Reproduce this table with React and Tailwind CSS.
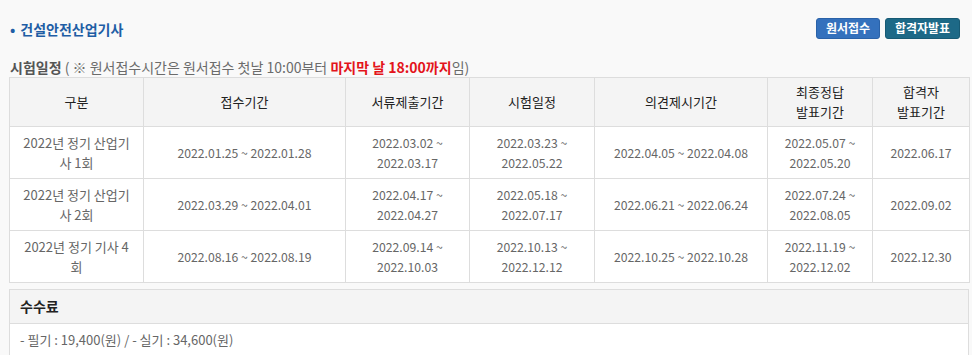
const COLS = [
  { label: ['구분'], w: 'w-[134px]' },
  { label: ['접수기간'], w: 'w-[202px]' },
  { label: ['서류제출기간'], w: 'w-[124px]' },
  { label: ['시험일정'], w: 'w-[125px]' },
  { label: ['의견제시기간'], w: 'w-[173px]' },
  { label: ['최종정답', '발표기간'], w: 'w-[105px]' },
  { label: ['합격자', '발표기간'], w: 'w-[97px]' },
]

// each cell is a list of lines, as wrapped in the original
const ROWS = [
  [['2022년 정기 산업기', '사 1회'], ['2022.01.25 ~ 2022.01.28'], ['2022.03.02 ~', '2022.03.17'], ['2022.03.23 ~', '2022.05.22'], ['2022.04.05 ~ 2022.04.08'], ['2022.05.07 ~', '2022.05.20'], ['2022.06.17']],
  [['2022년 정기 산업기', '사 2회'], ['2022.03.29 ~ 2022.04.01'], ['2022.04.17 ~', '2022.04.27'], ['2022.05.18 ~', '2022.07.17'], ['2022.06.21 ~ 2022.06.24'], ['2022.07.24 ~', '2022.08.05'], ['2022.09.02']],
  [['2022년 정기 기사 4', '회'], ['2022.08.16 ~ 2022.08.19'], ['2022.09.14 ~', '2022.10.03'], ['2022.10.13 ~', '2022.12.12'], ['2022.10.25 ~ 2022.10.28'], ['2022.11.19 ~', '2022.12.02'], ['2022.12.30']],
]

export default function App() {
  return (
    <div className="min-h-[355px] bg-[#f9f9f9] px-[9px] pt-[17px] font-['Noto_Sans_CJK_KR',sans-serif] text-[13px]">
      <div className="flex items-center justify-between pr-[3px] h-[24px]">
        <h2 className="text-[14px] font-bold text-[#1f5ea5] leading-[20px] pl-[1px]">
          <span className="mr-[5px]">•</span>건설안전산업기사
        </h2>
        <div className="flex gap-[5px] mt-[-2px]">
          <button className="h-[21px] w-[64px] rounded-[3px] bg-[#3471bd] border border-[#2a62a8] text-white text-[12px] font-bold leading-none">원서접수</button>
          <button className="h-[21px] w-[75px] rounded-[3px] bg-[#1d6987] border border-[#175a74] text-white text-[12px] font-bold leading-none">합격자발표</button>
        </div>
      </div>

      <p className="mt-[16px] leading-[20px] pl-[1px] text-[#6b6b6b] text-[14px] whitespace-nowrap">
        <span className="font-bold text-[#555]">시험일정</span>
        <span> ( ※ 원서접수시간은 원서접수 첫날 10:00부터 </span>
        <span className="font-bold text-[#e3141b]">마지막 날 18:00까지</span>
        <span>임)</span>
      </p>

      <table className="w-[960px] table-fixed border-collapse border border-[#dddddd] bg-white">
        <thead>
          <tr className="h-[49px] bg-[#f4f4f4]">
            {COLS.map((c, i) => (
              <th key={i} className={`${c.w} border border-[#dddddd] font-normal text-[#222] leading-[20px] text-center`}>
                {c.label.map((l, j) => <div key={j}>{l}</div>)}
              </th>
            ))}
          </tr>
        </thead>
        <tbody>
          {ROWS.map((r, i) => (
            <tr key={i} className="h-[52px]">
              {r.map((lines, j) => (
                <td key={j} className={`border border-[#dddddd] text-center text-[#666] leading-[20px] whitespace-nowrap ${j === 0 ? 'text-[13px]' : 'text-[12.2px]'}`}>
                  {lines.map((l, k) => <div key={k}>{l}</div>)}
                </td>
              ))}
            </tr>
          ))}
        </tbody>
      </table>

      <div className="mt-[6px] w-[960px] border border-[#dddddd] bg-white">
        <div className="h-[34px] bg-[#f4f4f4] border-b border-[#dddddd] flex items-center px-[10px] text-[14px] font-bold text-[#222]">수수료</div>
        <div className="h-[31px] flex items-center px-[10px] text-[#666] text-[13px]">- 필기 : 19,400(원) / - 실기 : 34,600(원)</div>
      </div>
    </div>
  )
}
